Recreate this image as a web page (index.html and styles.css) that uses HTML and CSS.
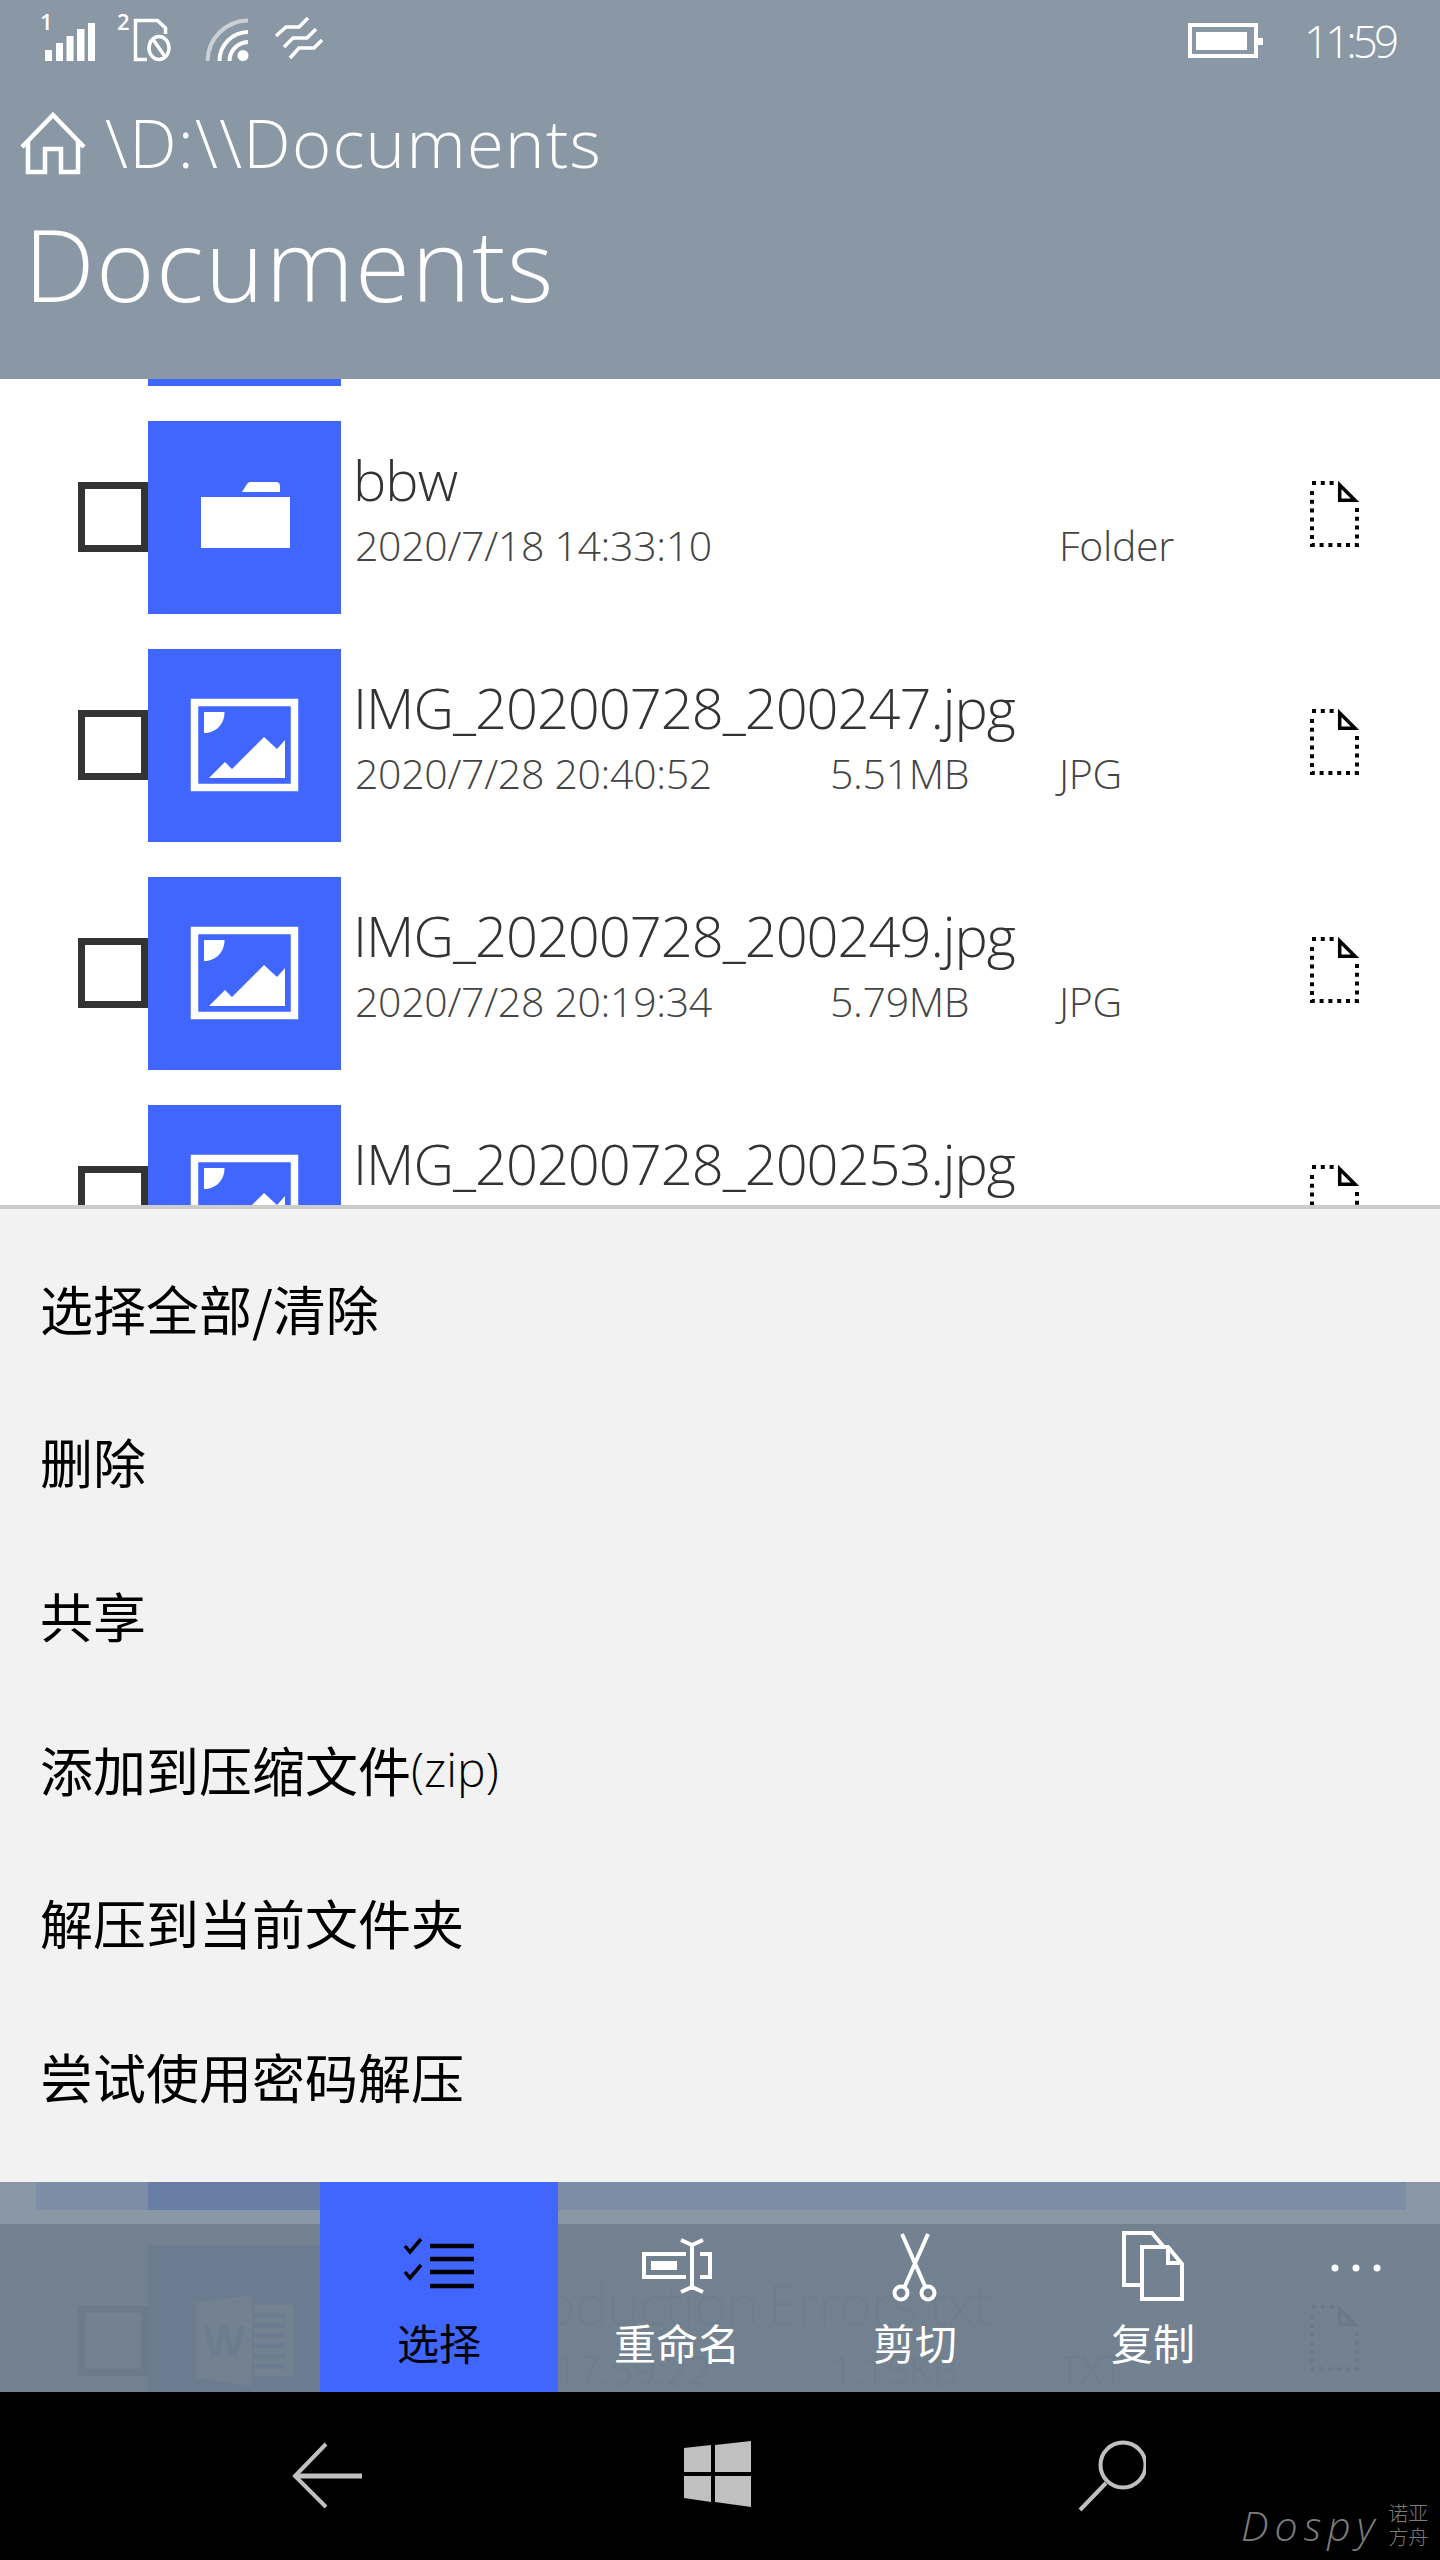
FILE: index.html
```html
<!DOCTYPE html>
<html lang="zh">
<head>
<meta charset="utf-8">
<title>Documents</title>
<link rel="stylesheet" href="styles.css">
</head>
<body>
<svg class="defs" width="0" height="0" aria-hidden="true">
  <defs>
    <g id="i-doc">
      <path d="M2 10V64H47V23" class="dot-line"/>
      <path d="M2 2H24" class="dot-line"/>
      <path d="M29.700 4V19.300H45Z" class="doc-corner"/>
    </g>
    <g id="i-image">
      <rect x="46.500" y="53.500" width="100" height="85" class="img-frame"/>
      <path d="M56 63H76.500C76.500 76 67 84 56 84Z" class="img-fill"/>
      <path d="M61 129L77 113L84 120L116 88L129 100L137 91V129Z" class="img-fill"/>
    </g>
  </defs>
</svg>
<div class="page">
  <header class="header">
    <div class="status">
      <svg class="status-left" width="340" height="70" viewBox="0 0 340 70">
        <text x="40" y="30" class="sim-num">1</text>
        <path d="M45 50h7v11h-7zM56 43h7v18h-7zM66.500 36h7v25h-7zM77 29h7.500v32h-7.500zM88 23h7v38h-7z" class="w"/>
        <text x="117" y="30" class="sim-num">2</text>
        <path d="M147 59.500H135.500V20.500H157.500L165.500 28V34" class="sw thin"/>
        <ellipse cx="159" cy="48" rx="10" ry="11.500" class="sw thin"/>
        <path d="M153.500 40L164.500 56" class="sw thin"/>
        <path d="M207.500 61A41 41 0 0 1 248 20.500" class="sw faded"/>
        <path d="M219.500 61A29 29 0 0 1 248 32" class="sw"/>
        <path d="M229.500 61A19 19 0 0 1 248 42" class="sw"/>
        <circle cx="243" cy="55.500" r="5.500" class="w"/>
        <path d="M276 36L286 27H299L308 18M284 47L293 38H307L316 29M290 58L299 48H314L322 40" class="sw thin"/>
      </svg>
      <div class="status-right">
        <svg width="76" height="36" viewBox="0 0 76 36">
          <rect x="2" y="2" width="66" height="31" class="sw"/>
          <rect x="8" y="9" width="51" height="18" class="w"/>
          <rect x="70" y="15" width="5" height="7" class="w"/>
        </svg>
        <span class="time">11:59</span>
      </div>
    </div>
    <div class="crumb">
      <svg class="home" width="68" height="64" viewBox="0 0 68 64">
        <path d="M3 35L34 3L65 35M9 30V60H26V37H42V60H59V30" class="sw home-line"/>
      </svg>
      <span class="crumb-text">\D:\\Documents</span>
    </div>
    <h1 class="title">Documents</h1>
  </header>

  <main class="list">
    <div class="sliver"></div>

    <div class="row">
      <span class="check"></span>
      <svg class="thumb" viewBox="0 0 193 193">
        <path d="M53 76H142V127H53Z" class="img-fill"/>
        <path d="M94 71L99 63Q100 61 103 61H128Q132 61 132 65V71Z" class="img-fill"/>
      </svg>
      <div class="info">
        <div class="name">bbw</div>
        <div class="meta"><span class="date">2020/7/18 14:33:10</span><span class="size"></span><span>Folder</span></div>
      </div>
      <svg class="doc" viewBox="0 0 50 67"><use href="#i-doc"/></svg>
    </div>

    <div class="row">
      <span class="check"></span>
      <svg class="thumb" viewBox="0 0 193 193"><use href="#i-image"/></svg>
      <div class="info">
        <div class="name">IMG_20200728_200247.jpg</div>
        <div class="meta"><span class="date">2020/7/28 20:40:52</span><span class="size">5.51MB</span><span>JPG</span></div>
      </div>
      <svg class="doc" viewBox="0 0 50 67"><use href="#i-doc"/></svg>
    </div>

    <div class="row">
      <span class="check"></span>
      <svg class="thumb" viewBox="0 0 193 193"><use href="#i-image"/></svg>
      <div class="info">
        <div class="name">IMG_20200728_200249.jpg</div>
        <div class="meta"><span class="date">2020/7/28 20:19:34</span><span class="size">5.79MB</span><span>JPG</span></div>
      </div>
      <svg class="doc" viewBox="0 0 50 67"><use href="#i-doc"/></svg>
    </div>

    <div class="row">
      <span class="check"></span>
      <svg class="thumb" viewBox="0 0 193 193"><use href="#i-image"/></svg>
      <div class="info">
        <div class="name">IMG_20200728_200253.jpg</div>
      </div>
      <svg class="doc" viewBox="0 0 50 67"><use href="#i-doc"/></svg>
    </div>

    <div class="hidden-rows"></div>

    <div class="row row-selected">
      <span class="thumb-plain"></span>
    </div>

    <div class="row row-ghost">
      <span class="check"></span>
      <svg class="thumb" viewBox="0 0 193 193">
        <path d="M48 58L104 50V141L48 133Z" class="img-fill"/>
        <path d="M106 60H145V131H106ZM106 68V73H137V68ZM106 78V83H137V78ZM106 88V93H137V88ZM106 98V103H137V98ZM106 109V114H137V109ZM106 119V124H137V119Z" class="img-fill even"/>
        <text x="76" y="112" class="word-w">W</text>
      </svg>
      <div class="info">
        <div class="name">Fixed Production Errors.txt</div>
        <div class="meta"><span class="date">2020/7/17 17:59:22</span><span class="size">1.15KB</span><span>TXT</span></div>
      </div>
      <svg class="doc" viewBox="0 0 50 67"><use href="#i-doc"/></svg>
    </div>
  </main>

  <section class="menu">
    <div class="menu-item">选择全部/清除</div>
    <div class="menu-item">删除</div>
    <div class="menu-item">共享</div>
    <div class="menu-item">添加到压缩文件<span class="latin">(zip)</span></div>
    <div class="menu-item">解压到当前文件夹</div>
    <div class="menu-item">尝试使用密码解压</div>
  </section>

  <section class="appbar">
    <div class="btn btn-active">
      <svg class="btn-icon" viewBox="0 0 238 80">
        <path d="M85 18L90 24L101 11M85 44L90 50L101 37" class="k check-mark"/>
        <path d="M110 18H154M110 31H154M110 44H154M110 58H154" class="k list-line"/>
      </svg>
      <span class="btn-label">选择</span>
    </div>
    <div class="btn">
      <svg class="btn-icon" viewBox="0 0 238 80">
        <path d="M128 26H86V49H128M142 26H152V49H142" class="sw"/>
        <rect x="93" y="33" width="26" height="9" class="w"/>
        <path d="M134 17V59M123 12L134 17L145 12M123 64L134 59L145 64" class="sw"/>
      </svg>
      <span class="btn-label">重命名</span>
    </div>
    <div class="btn">
      <svg class="btn-icon" viewBox="0 0 238 80">
        <path d="M106 6L129 58M132 6L109 58" class="sw"/>
        <circle cx="105" cy="65" r="6.500" class="sw"/>
        <circle cx="132" cy="65" r="6.500" class="sw"/>
      </svg>
      <span class="btn-label">剪切</span>
    </div>
    <div class="btn">
      <svg class="btn-icon" viewBox="0 0 238 80">
        <path d="M106 57H90V5H118L129 18" class="sw"/>
        <path d="M108 19H134L148 36V71H108Z M134 19V35H148" class="sw"/>
      </svg>
      <span class="btn-label">复制</span>
    </div>
    <div class="btn btn-more">
      <svg class="more-icon" width="168" height="80" viewBox="0 0 168 80">
        <circle cx="63" cy="40" r="3.500" class="w"/>
        <circle cx="84" cy="40" r="3.500" class="w"/>
        <circle cx="105" cy="40" r="3.500" class="w"/>
      </svg>
    </div>
  </section>

  <nav class="nav">
    <svg width="80" height="80" viewBox="0 0 80 80">
      <path d="M38 8L7 40L38 71" class="nav-line"/>
      <path d="M7 40H74" class="nav-line nav-shaft"/>
    </svg>
    <svg width="80" height="80" viewBox="0 0 80 80">
      <path d="M7 12L34 9V36H7ZM38 9L74 5V36H38ZM7 40H34V66L7 62ZM38 40H74V71L38 66Z" class="nav-fill"/>
    </svg>
    <svg width="80" height="80" viewBox="0 0 80 80">
      <circle cx="57" cy="29" r="22.500" class="nav-line"/>
      <path d="M40 47L14 74" class="nav-line"/>
    </svg>
    <div class="mark">
      <span class="mark-name">Dospy</span>
      <span class="mark-cn">诺亚<br>方舟</span>
    </div>
  </nav>
</div>
</body>
</html>
```

FILE: styles.css
```css
* { box-sizing: border-box; }
html, body { margin: 0; padding: 0; }
body { background: #fff; font-family: "Open Sans", "Noto Sans CJK SC", sans-serif; }
.defs { position: absolute; }

.page { position: relative; width: 1440px; height: 2560px; overflow: hidden; display: flex; flex-direction: column; background: #fff; }

.w { fill: #fff; }
.sw { fill: none; stroke: #fff; stroke-width: 4; }
.thin { stroke-width: 3.500; }
.faded { stroke-opacity: .55; }
.k { fill: none; stroke: #000; }
.sim-num { fill: #fff; font: 600 22px "Open Sans", sans-serif; }

/* header */
.header { height: 379px; flex: none; background: #8a97a5; color: #fff; }
.status { height: 102px; display: flex; justify-content: space-between; align-items: flex-start; }
.status-left { display: block; }
.status-right { display: flex; align-items: flex-start; margin-top: 23px; padding-right: 45px; gap: 40px; }
.status-right svg { display: block; }
.time { font-weight: 300; font-size: 44px; line-height: 44px; letter-spacing: -4px; margin-top: -4px; }
.crumb { height: 80px; display: flex; align-items: center; padding-left: 19px; gap: 18px; }
.home { flex: none; margin-top: 4px; }
.home-line { stroke-width: 4.500; }
.crumb-text { font-weight: 350; font-size: 67px; line-height: 80px; letter-spacing: 1.300px; }
.title { margin: 26px 0 0; padding-left: 24px; font-weight: 350; font-size: 100px; line-height: 110px; letter-spacing: 1.400px; }

/* list */
.list { flex: 1; min-height: 0; overflow: hidden; color: #333; }
.sliver { width: 193px; height: 7px; margin: 0 0 35px 148px; background: #4066ff; }
.row { display: flex; align-items: flex-start; height: 193px; margin-bottom: 35px; padding-left: 78px; }
.check { flex: none; width: 70px; height: 70px; margin-top: 61px; border: 7px solid #333; }
.thumb { flex: none; display: block; width: 193px; height: 193px; background: #4066ff; }
.thumb-plain { display: block; width: 193px; height: 193px; background: #4066ff; }
.img-frame { fill: none; stroke: #fff; stroke-width: 7.500; }
.img-fill { fill: #fff; }
.even { fill-rule: evenodd; }
.word-w { fill: #4066ff; font: 700 44px "Liberation Sans", sans-serif; text-anchor: middle; }
.info { flex: none; width: 969px; padding: 24px 0 0 12px; }
.name { font-weight: 350; font-size: 56px; line-height: 68px; letter-spacing: -1px; white-space: nowrap; }
.meta { display: flex; margin-top: 7px; padding-left: 2px; font-size: 41px; line-height: 50px; font-weight: 350; color: #444; white-space: nowrap; letter-spacing: -.3px; }
.date { width: 475px; flex: none; }
.size { width: 229px; flex: none; }
.doc { flex: none; display: block; width: 50px; height: 67px; margin-top: 60px; }
.dot-line { fill: none; stroke: #000; stroke-width: 4; stroke-dasharray: 4 4.800; }
.doc-corner { fill: #fff; stroke: #000; stroke-width: 3.500; }
.hidden-rows { height: 684px; }
.row-selected { margin-left: 36px; margin-right: 34px; padding-left: 112px; background: rgba(64, 102, 255, .4); }
.row-ghost .name, .row-ghost .meta { color: #8c8c8c; }
.row-ghost .name { word-spacing: -4px; }

/* popup menu */
.menu { position: absolute; left: 0; top: 1205px; width: 1440px; height: 977px; padding-top: 22px; background: #f2f2f2; border-top: 4px solid #ccc; color: #000; }
.menu-item { display: flex; align-items: center; height: 153.600px; padding-left: 40px; font-family: "Noto Sans CJK SC", sans-serif; font-weight: 400; font-size: 53px; white-space: nowrap; }
.latin { font-family: "Open Sans", sans-serif; font-weight: 350; font-size: 48px; }

/* app bar */
.appbar { position: absolute; left: 0; top: 2182px; width: 1440px; height: 210px; display: flex; padding-left: 320px; color: #fff;
  background: linear-gradient(to bottom, rgba(114, 130, 147, .83) 42px, rgba(110, 125, 140, .97) 42px); }
.btn { flex: none; width: 238px; padding-top: 46px; display: flex; flex-direction: column; align-items: center; }
.btn-active { background: #4066ff; color: #000; }
.btn-more { width: 168px; }
.btn-icon { display: block; width: 238px; height: 80px; flex: none; }
.more-icon { display: block; flex: none; }
.btn-label { margin-top: 6px; font-family: "Noto Sans CJK SC", sans-serif; font-size: 42px; line-height: 56px; font-weight: 400; }
.check-mark { stroke-width: 3.500; }
.list-line { stroke-width: 4.500; }

/* navigation bar */
.nav { position: relative; flex: none; height: 168px; display: flex; align-items: center; gap: 309px; padding-left: 288px; background: #000; }
.nav svg { display: block; flex: none; }
.nav-line { fill: none; stroke: #c0c0c0; stroke-width: 4; }
.nav-shaft { stroke-width: 5; }
.nav-fill { fill: #c0c0c0; }
.mark { position: absolute; left: 1241px; top: 108px; display: flex; align-items: center; gap: 8px; color: #7c7c7c; }
.mark-name { font-style: italic; font-weight: 300; font-size: 41px; line-height: 50px; letter-spacing: 6px; }
.mark-cn { font-family: "Noto Sans CJK SC", sans-serif; font-weight: 300; font-size: 20px; line-height: 24px; }
```
